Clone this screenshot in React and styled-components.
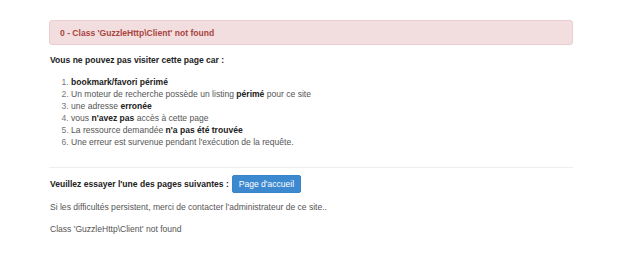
import styled, { createGlobalStyle } from 'styled-components';

const GlobalStyle = createGlobalStyle`
  body {
    margin: 0;
    background: #fff;
    font-family: 'Liberation Sans', Arial, sans-serif;
    font-size: 8.55px;
    line-height: 12px;
    color: #333;
  }
`;

const Page = styled.div`
  width: 524px;
  padding: 20px 0 0 49px;
`;

const Alert = styled.div`
  height: 25px;
  box-sizing: border-box;
  display: flex;
  align-items: center;
  padding: 0 10px;
  background: #f2dede;
  border: 1px solid #ebccd1;
  border-radius: 3px;
  color: #a94442;
  font-weight: bold;
`;

const Lead = styled.p`
  margin: 9px 0 10px 1px;
  font-weight: bold;
  color: #222;
`;

const Reasons = styled.ol`
  margin: 0;
  padding-left: 22px;
  color: #555;

  li::marker {
    color: #777;
  }

  b {
    color: #222;
  }
`;

const Rule = styled.hr`
  margin: 19px 0 7px;
  border: 0;
  border-top: 1px solid #eee;
`;

const Row = styled.p`
  display: flex;
  align-items: center;
  gap: 3px;
  margin: 0 0 0 1px;
  font-weight: bold;
  color: #222;
`;

const Button = styled.a`
  display: inline-block;
  padding: 3px 6px;
  background: #3d89d0;
  border: 1px solid #3a84c9;
  border-radius: 2px;
  color: #fff;
  font-weight: normal;
  text-decoration: none;
  font-size: 8.55px;
  line-height: 10px;
`;

const Note = styled.p`
  margin: ${(p) => p.$top}px 0 0 1px;
  color: #555;
`;

export default function App() {
  return (
    <>
      <GlobalStyle />
      <Page>
        <Alert>0 - Class 'GuzzleHttp\Client' not found</Alert>
        <Lead>Vous ne pouvez pas visiter cette page car :</Lead>
        <Reasons>
          <li><b>bookmark/favori périmé</b></li>
          <li>Un moteur de recherche possède un listing <b>périmé</b> pour ce site</li>
          <li>une adresse <b>erronée</b></li>
          <li>vous <b>n'avez pas</b> accès à cette page</li>
          <li>La ressource demandée <b>n'a pas été trouvée</b></li>
          <li>Une erreur est survenue pendant l'exécution de la requête.</li>
        </Reasons>
        <Rule />
        <Row>
          Veuillez essayer l'une des pages suivantes :
          <Button href="#">Page d'accueil</Button>
        </Row>
        <Note $top={8}>Si les difficultés persistent, merci de contacter l'administrateur de ce site..</Note>
        <Note $top={10}>Class 'GuzzleHttp\Client' not found</Note>
      </Page>
    </>
  );
}
